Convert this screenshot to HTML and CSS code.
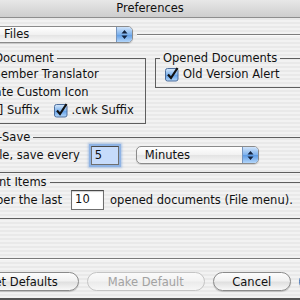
FILE: index.html
```html
<!DOCTYPE html>
<html lang="en">
<head>
<meta charset="UTF-8" />
<title>Preferences</title>
<link rel="stylesheet" href="styles.css">
</head>
<body>

<div class="titlebar">Preferences</div>

<div class="window">

  <div class="tabrow">
    <div class="popup files">
      <span class="popup-label">Files</span>
      <span class="popup-arrows">
        <svg width="7" height="11" viewBox="0 0 7 11"><path d="M0.5 4.5 L3.5 1 L6.5 4.5 Z M0.5 6.5 L3.5 10 L6.5 6.5 Z" fill="#13233f"/></svg>
      </span>
    </div>
    <div class="rule"></div>
  </div>

  <div class="groups">
    <fieldset class="box doc">
      <legend>Saved Document</legend>
      <div class="row">
        <label class="check"><svg class="cb" width="15" height="15" viewBox="0 0 15 15"><defs><linearGradient id="cbg" x1="0" y1="0" x2="0" y2="1"><stop offset="0" stop-color="#d7e9fc"/><stop offset="0.5" stop-color="#7fb3ec"/><stop offset="0.51" stop-color="#5f9de6"/><stop offset="1" stop-color="#b4d7fa"/></linearGradient></defs><rect x="0.5" y="1.5" width="12.5" height="12.5" rx="2" fill="url(#cbg)" stroke="#4f6f9c"/><path d="M3 7.5 L6 11 L12.5 1" fill="none" stroke="#111" stroke-width="2.2"/></svg>Remember Translator</label>
      </div>
      <div class="row">
        <label class="check"><svg class="cb" width="15" height="15" viewBox="0 0 15 15"><rect x="0.5" y="1.5" width="12.5" height="12.5" rx="2" fill="url(#cbg)" stroke="#4f6f9c"/><path d="M3 7.5 L6 11 L12.5 1" fill="none" stroke="#111" stroke-width="2.2"/></svg>Create Custom Icon</label>
      </div>
      <div class="row">
        <label class="check"><svg class="cb" width="15" height="15" viewBox="0 0 15 15"><rect x="0.5" y="1.5" width="12.5" height="12.5" rx="2" fill="url(#cbg)" stroke="#4f6f9c"/><path d="M3 7.5 L6 11 L12.5 1" fill="none" stroke="#111" stroke-width="2.2"/></svg>[.cw] Suffix</label>
        <label class="check"><svg class="cb" width="15" height="15" viewBox="0 0 15 15"><rect x="0.5" y="1.5" width="12.5" height="12.5" rx="2" fill="url(#cbg)" stroke="#4f6f9c"/><path d="M3 7.5 L6 11 L12.5 1" fill="none" stroke="#111" stroke-width="2.2"/></svg>.cwk Suffix</label>
      </div>
    </fieldset>

    <fieldset class="box opened">
      <legend>Opened Documents</legend>
      <div class="row">
        <label class="check"><svg class="cb" width="15" height="15" viewBox="0 0 15 15"><rect x="0.5" y="1.5" width="12.5" height="12.5" rx="2" fill="url(#cbg)" stroke="#4f6f9c"/><path d="M3 7.5 L6 11 L12.5 1" fill="none" stroke="#111" stroke-width="2.2"/></svg>Old Version Alert</label>
      </div>
    </fieldset>
  </div>

  <fieldset class="box wide autosave">
    <legend>Auto-Save</legend>
    <div class="row line">
      <span>When idle, save every</span>
      <span class="field focused">5</span>
      <div class="popup minutes">
        <span class="popup-label">Minutes</span>
        <span class="popup-arrows">
          <svg width="7" height="11" viewBox="0 0 7 11"><path d="M0.5 4.5 L3.5 1 L6.5 4.5 Z M0.5 6.5 L3.5 10 L6.5 6.5 Z" fill="#13233f"/></svg>
        </span>
      </div>
    </div>
  </fieldset>

  <fieldset class="box wide recent">
    <legend>Recent Items</legend>
    <div class="row line">
      <span>Remember the last</span>
      <span class="field count">10</span>
      <span class="after">opened documents (File menu).</span>
    </div>
  </fieldset>

  <div class="separator"></div>

  <div class="buttons">
    <button class="btn">Reset Defaults</button>
    <button class="btn" disabled>Make Default</button>
    <button class="btn cancel">Cancel</button>
    <button class="btn default">OK</button>
  </div>

</div>

</body>
</html>
```

FILE: styles.css
```css
* {
  box-sizing: border-box;
}

html, body {
  margin: 0;
}

body {
  width: 300px;
  height: 300px;
  overflow: hidden;
  font-family: 'DejaVu Sans', Verdana, sans-serif;
  font-size: 11.5px;
  color: #111;
  background: repeating-linear-gradient(#f2f2f2 0, #f2f2f2 2px, #e9e9e9 2px, #e9e9e9 4px);
  border-bottom: 2px solid #555;
}

/* Barra de título */
.titlebar {
  height: 18px;
  line-height: 17px;
  text-align: center;
  background: linear-gradient(#e7e7e7, #cecece);
  border-bottom: 1px solid #8e8e8e;
}

/* Janela recortada: começa fora da tela à esquerda */
.window {
  margin-left: -60px;
  width: 440px;
  display: flex;
  flex-direction: column;
}

.tabrow {
  display: flex;
  align-items: center;
  margin-top: 8px;
  height: 17px;
}

.popup {
  display: flex;
  height: 17px;
  border: 1px solid #8b8b8b;
  border-radius: 5px;
  background: linear-gradient(#ffffff, #f1f1f1 50%, #e3e3e3 51%, #f7f7f7);
  overflow: hidden;
  box-shadow: 0 1px 1px rgba(0, 0, 0, 0.15);
}
.popup-label {
  flex: 1;
  line-height: 15px;
}
.popup-arrows {
  width: 16px;
  display: flex;
  align-items: center;
  justify-content: center;
  background: linear-gradient(#cfe3fa, #7db1ec 50%, #5c9ae4 51%, #b3d6fa);
  border-left: 1px solid #7594bd;
}

.popup.files {
  margin-left: 45px;
  width: 148px;
}
.popup.files .popup-label {
  padding-left: 18px;
}

.rule {
  flex: 1;
  height: 1px;
  margin-left: 4px;
  background: #7d7d7d;
  box-shadow: 0 1px 0 #fbfbfb;
}

/* Caixas de grupo */
.groups {
  display: flex;
  align-items: flex-start;
  gap: 9px;
  margin-top: 8px;
  padding-left: 7px;
}

.box {
  margin: 0;
  padding: 0 0 4px 9px;
  border: 1px solid #5e5e5e;
  min-width: 0;
}
.box legend {
  padding: 0 3px;
  margin-left: -5px;
  line-height: 14px;
}

.box.doc {
  width: 199px;
}
.box.opened {
  width: 220px;
}

.row {
  display: flex;
  align-items: center;
  height: 18px;
}

.check {
  display: flex;
  align-items: center;
  gap: 3px;
}
.check + .check {
  margin-left: 14px;
}
.cb {
  flex: none;
}

.box.wide {
  margin-left: 2px;
  width: 430px;
}
.box.wide legend {
  margin-left: 16px;
}
.box.autosave {
  margin-top: 6px;
  padding-bottom: 6px;
}
.box.recent {
  margin-top: 2px;
  padding-bottom: 7px;
}

.row.line {
  height: 22px;
}

.field {
  display: inline-block;
  height: 19px;
  line-height: 17px;
  padding-left: 3px;
  background: #fff;
  border: 1px solid #6f6f6f;
  border-top-color: #4a4a4a;
  box-shadow: inset 0 1px 1px rgba(0, 0, 0, 0.2);
}
.field.focused {
  width: 28px;
  margin-left: 11px;
  background: #c6dbfb;
  box-shadow: 0 0 0 2px #8fb3e4, 0 0 2px 3px rgba(110, 155, 220, 0.5);
}
.field.count {
  width: 33px;
  height: 20px;
  margin-left: 9px;
}
.after {
  margin-left: 6px;
}

.popup.minutes {
  margin-left: 17px;
  width: 123px;
  height: 18px;
}
.popup.minutes .popup-label {
  padding-left: 8px;
  line-height: 16px;
}

.separator {
  margin-top: 39px;
  height: 1px;
  background: #7a7a7a;
  box-shadow: 0 1px 0 #fbfbfb;
}

/* Botões */
.buttons {
  display: flex;
  gap: 8px;
  margin-top: 13px;
  margin-left: 13px;
}

.btn {
  font: inherit;
  color: #111;
  height: 19px;
  padding: 0 20px;
  border: 1px solid #8a8a8a;
  border-radius: 10px;
  background: linear-gradient(#fdfdfd, #f1f1f1 45%, #e0e0e0 55%, #f8f8f8);
  box-shadow: 0 1px 1px rgba(0, 0, 0, 0.2);
}
.btn:disabled {
  color: #a2a2a2;
  border-color: #c4c4c4;
  background: linear-gradient(#fafafa, #f3f3f3 45%, #ebebeb 55%, #f7f7f7);
  box-shadow: none;
}
.btn.cancel {
  padding: 0 18.5px;
}
.btn.default {
  width: 70px;
  border-color: #3a6db3;
  background: linear-gradient(#b5d8fb, #62a2ea 50%, #3f88e0 51%, #96c8f7);
}
```
